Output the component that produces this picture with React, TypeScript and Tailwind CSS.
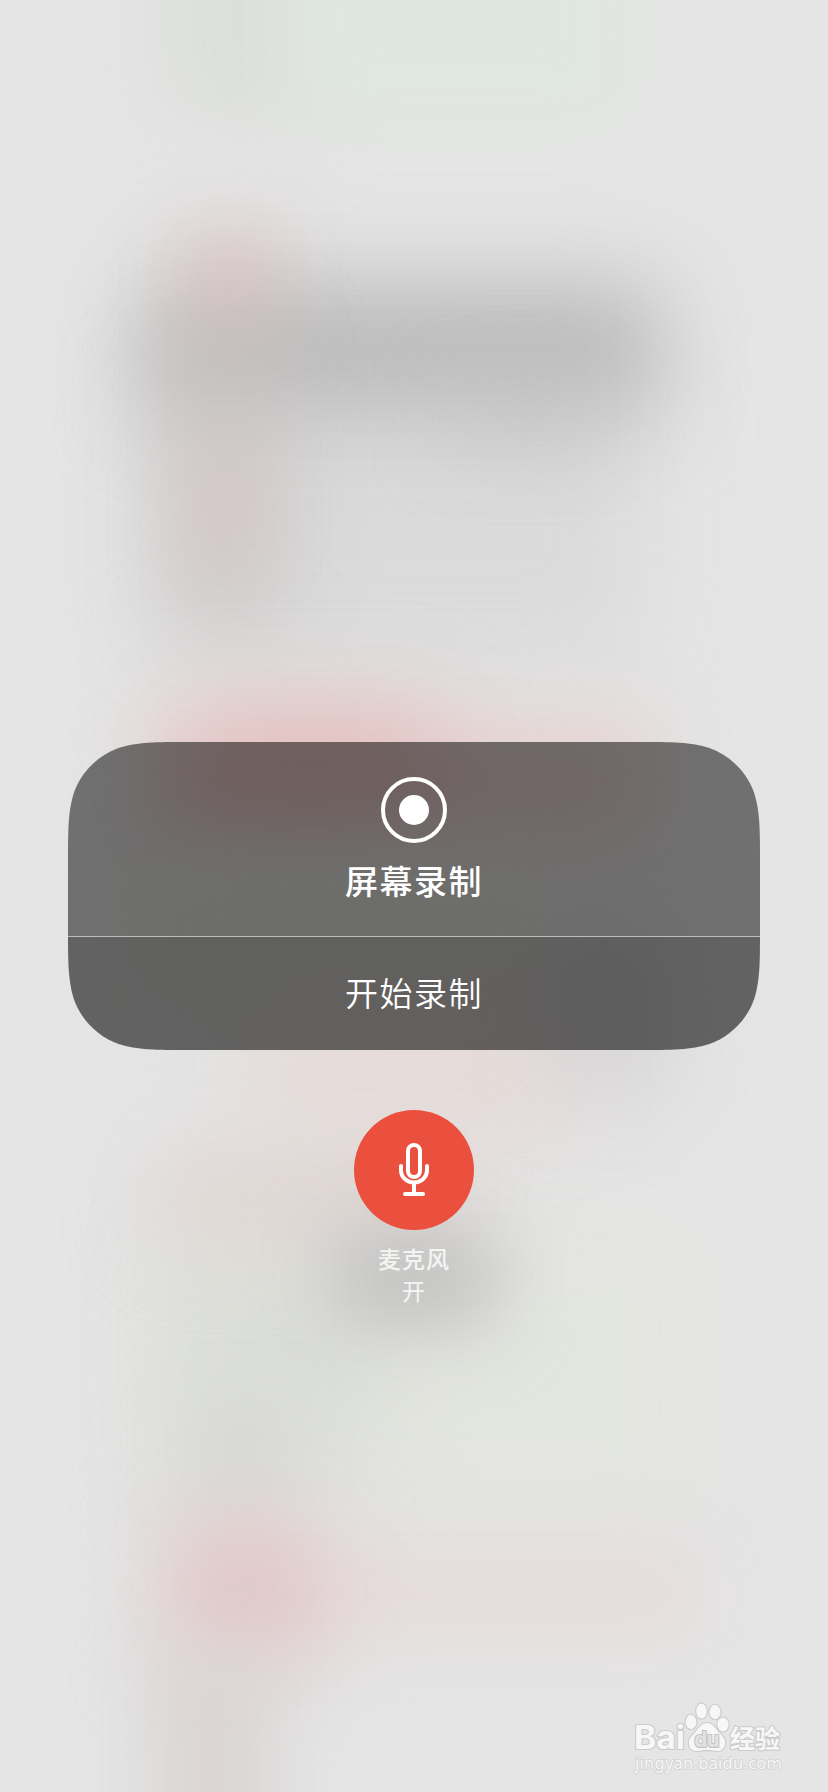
const BLOBS = [
  // top
  "left-[160px] top-[-80px] w-[160px] h-[200px] bg-[#dcdfdb] blur-[36px]",
  "left-[290px] top-[-80px] w-[340px] h-[200px] bg-[#dfe6df] blur-[36px]",
  // heading area
  "left-[160px] top-[400px] w-[480px] h-[260px] bg-[#dadada] blur-[50px]",
  "left-[145px] top-[285px] w-[515px] h-[130px] bg-[#bababa] blur-[46px]",
  "left-[450px] top-[380px] w-[150px] h-[70px] bg-[#c4c4c4]/45 blur-[38px]",
  "left-[155px] top-[330px] w-[130px] h-[300px] bg-[#c9c3c1]/60 blur-[40px]",
  "left-[175px] top-[225px] w-[110px] h-[100px] bg-[#dcbaba]/50 blur-[34px]",
  "left-[190px] top-[455px] w-[75px] h-[100px] bg-[#dcbcbe]/30 blur-[30px]",
  // behind the card
  "left-[150px] top-[725px] w-[500px] h-[110px] bg-[#e5cecd] blur-[42px]",
  "left-[185px] top-[705px] w-[250px] h-[115px] bg-[#e4b6b6]/65 blur-[46px]",
  "left-[130px] top-[870px] w-[400px] h-[130px] bg-[#dde0d7] blur-[42px]",
  "left-[250px] top-[990px] w-[330px] h-[150px] bg-[#e6d9d6]/80 blur-[44px]",
  "left-[550px] top-[930px] w-[120px] h-[170px] bg-[#cfccd0]/60 blur-[44px]",
  // lower half
  "left-[160px] top-[1240px] w-[530px] h-[260px] bg-[#e3e5df] blur-[40px]",
  "left-[160px] top-[1240px] w-[220px] h-[220px] bg-[#dadcd7]/80 blur-[46px]",
  "left-[160px] top-[1150px] w-[300px] h-[95px] bg-[#dfd1ce]/75 blur-[42px]",
  "left-[335px] top-[1230px] w-[160px] h-[95px] bg-[#bababa]/80 blur-[36px]",
  "left-[190px] top-[1400px] w-[100px] h-[110px] bg-[#d2d3d3]/60 blur-[36px]",
  "left-[200px] top-[1555px] w-[500px] h-[75px] bg-[#e6dada] blur-[38px]",
  "left-[165px] top-[1515px] w-[155px] h-[150px] bg-[#e0c4c5]/85 blur-[44px]",
  "left-[150px] top-[1650px] w-[125px] h-[230px] bg-[#d9d4d3]/90 blur-[34px]",
];

function Wallpaper() {
  return (
    <div className="absolute inset-0 overflow-hidden">
      {BLOBS.map((blob) => (
        <div key={blob} className={`absolute ${blob}`} />
      ))}
    </div>
  );
}

function MicIcon() {
  return (
    <svg width="32" height="56" viewBox="0 0 32 56" fill="none" stroke="#fff" strokeWidth="4" strokeLinecap="round">
      <rect x="10" y="3" width="12" height="32" rx="6" />
      <path d="M3 24v4.5a13 12 0 0 0 26 0V24" />
      <path d="M16 41v11M7 52h18" />
    </svg>
  );
}

function Watermark() {
  return (
    <svg
      className="absolute left-[628px] top-[1696px]"
      width="170"
      height="90"
      viewBox="0 0 170 90"
      fill="#f7f7f7"
      stroke="#cbcbcb"
      strokeWidth="2.2"
      strokeLinejoin="round"
      paintOrder="stroke"
    >
      <text x="6" y="53" fontSize="32" fontWeight="700" textLength="51" lengthAdjust="spacingAndGlyphs" fontFamily="Inter, sans-serif">
        Bai
      </text>
      <ellipse cx="63" cy="26" rx="5.4" ry="7.2" />
      <ellipse cx="73.5" cy="15" rx="5.3" ry="7.6" />
      <ellipse cx="87" cy="16" rx="5.5" ry="7.2" />
      <ellipse cx="95" cy="28.5" rx="5.6" ry="7" />
      <path d="M79 27c-6 0-8 5-12 9.500-4 4-7 7-6 12 1.500 7 7 7 12 6 4-.6 8-.6 12 0 5 1 10.500 1 12-6 1-5-2-8-6-12-4-4.500-6-9.500-12-9.500z" />
      <text x="66.5" y="51" fontSize="21" fontWeight="700" fill="#e2e2e2" stroke="#c2c2c2" textLength="25" lengthAdjust="spacingAndGlyphs" fontFamily="Inter, sans-serif">
        du
      </text>
      <text x="102" y="52" fontSize="25" fontWeight="700" fontFamily="'Noto Sans CJK SC', sans-serif">
        经验
      </text>
      <text x="7" y="73" fontSize="16.5" stroke="#d0d0d0" strokeWidth="1.6" textLength="147" fontFamily="'Noto Sans', sans-serif">
        jingyan.baidu.com
      </text>
    </svg>
  );
}

export default function App() {
  return (
    <div className="relative flex h-[1792px] w-[828px] flex-col items-center overflow-hidden bg-[#e5e5e5] pt-[742px] font-['Liberation_Sans','Noto_Sans_CJK_SC',sans-serif] text-white">
      <Wallpaper />

      {/* Screen recording card */}
      <div className="relative flex h-[308px] w-[692px] shrink-0 flex-col [clip-path:path('M122.3_0H569.7C604.9_0_622.5_0_641.5_6C662.2_13.5_678.5_29.8_686_50.5C692_69.5_692_87.1_692_122.3V185.7C692_220.9_692_238.5_686_257.5C678.5_278.2_662.2_294.5_641.5_302C622.5_308_604.9_308_569.7_308H122.3C87.1_308_69.5_308_50.5_302C29.8_294.5_13.5_278.2_6_257.5C0_238.5_0_220.9_0_185.7V122.3C0_87.1_0_69.5_6_50.5C13.5_29.8_29.8_13.5_50.5_6C69.5_0_87.1_0_122.3_0Z')]">
        <div className="flex h-[194px] flex-col items-center bg-black/51 pt-[35px]">
          <div className="flex size-[66px] items-center justify-center rounded-full border-4 border-white">
            <div className="size-[30px] rounded-full bg-white" />
          </div>
          <h1 className="mt-[16px] text-[33px] leading-[48px] font-medium tracking-[1.5px]">屏幕录制</h1>
        </div>
        <div className="h-px bg-[#bcbcbc]" />
        <button className="flex h-[113px] items-center justify-center bg-black/57 pt-[2px] text-[33px] font-[350] tracking-[1.5px]">
          开始录制
        </button>
      </div>

      {/* Microphone toggle */}
      <button className="relative mt-[60px] flex size-[120px] shrink-0 items-center justify-center rounded-full bg-[#eb503e]">
        <MicIcon />
      </button>
      <div className="relative mt-[14px] text-center text-[23px] leading-[32px] tracking-[1px] text-white/80">
        <p className="font-medium">麦克风</p>
        <p>开</p>
      </div>

      <Watermark />
    </div>
  );
}
